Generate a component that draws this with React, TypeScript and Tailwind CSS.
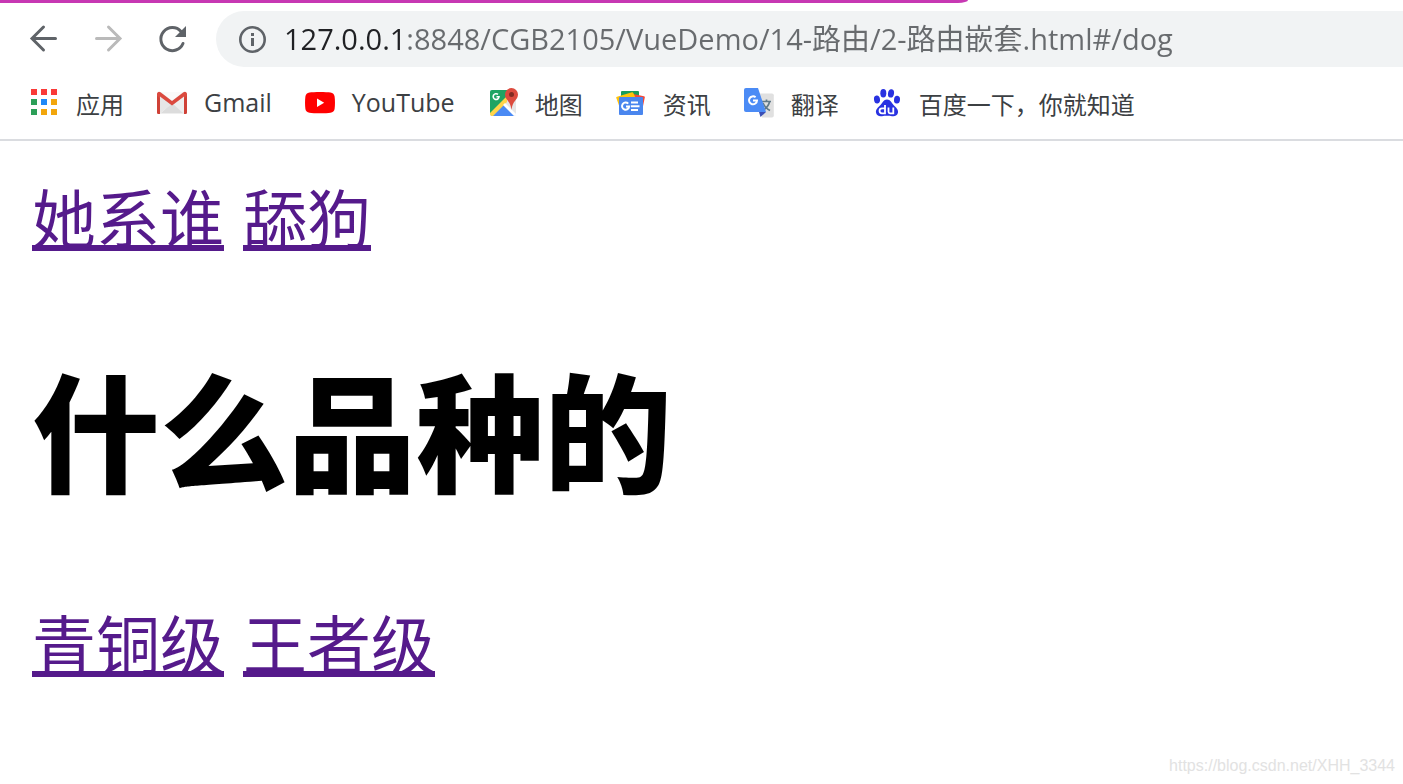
import type { ReactNode } from "react";

function BackIcon() {
  return (
    <svg viewBox="0 0 32 32" className="size-8" fill="none" stroke="#5f6368" strokeWidth="3" strokeLinecap="round" aria-hidden="true">
      <path d="M27.500 15.500H5M15.500 4 4 15.500 15.500 27" />
    </svg>
  );
}

function ForwardIcon() {
  return (
    <svg viewBox="0 0 32 32" className="size-8" fill="none" stroke="#bababa" strokeWidth="3" strokeLinecap="round" aria-hidden="true">
      <path d="M4.500 15.500H27M16.500 4 28 15.500 16.500 27" />
    </svg>
  );
}

function ReloadIcon() {
  return (
    <svg viewBox="0 0 32 32" className="size-8" fill="none" aria-hidden="true">
      <path d="M27 20.500A11.500 11.500 0 1 1 25 8.500" stroke="#5f6368" strokeWidth="3" strokeLinecap="round" />
      <path d="M30 3v11H19z" fill="#5f6368" />
    </svg>
  );
}

function InfoIcon() {
  return (
    <svg viewBox="0 0 32 32" className="size-8 shrink-0" fill="none" aria-hidden="true">
      <circle cx="16.500" cy="16.500" r="12.200" stroke="#5f6368" strokeWidth="2.600" />
      <path d="M15 10h3v3h-3zM15 15h3v8h-3z" fill="#5f6368" />
    </svg>
  );
}

function AppsIcon() {
  return (
    <svg viewBox="0 0 32 32" className="size-8" aria-hidden="true">
      <path fill="#f93a37" d="M3 2h6v6H3zM13 2h6v6h-6zM23 2h6v6h-6z" />
      <path fill="#2c9f58" d="M3 12h6v6H3zM3 22h6v6H3z" />
      <path fill="#1e88f7" d="M13 12h6v6h-6z" />
      <path fill="#f2a60c" d="M23 12h6v6h-6zM13 22h6v6h-6zM23 22h6v6h-6z" />
    </svg>
  );
}

function GmailIcon() {
  return (
    <svg viewBox="0 0 32 32" className="size-8" aria-hidden="true">
      <path fill="#eeeeee" d="M3 5h26v22H3z" />
      <path fill="#dcdcdc" d="m5 26 11-10 11 10z" />
      <path fill="#e6e6e6" d="M16 17 4 6v20z" />
      <path fill="#fafafa" d="M5 5h22L16 14z" />
      <path fill="#db4a3f" d="M1 7c0-2 2-3 3.500-1.800L16 14 27.500 5.200C29 4 31 5 31 7v18.500c0 .8-.7 1.500-1.500 1.500H28V9.500L16 18.500 4 9.500V27H2.500C1.700 27 1 26.300 1 25.500z" />
      <path fill="#c53a31" d="M1 9l3 2.500V27H2.500C1.700 27 1 26.300 1 25.500zM31 9l-3 2.500V27h1.500c.8 0 1.500-.7 1.500-1.500z" opacity=".55" />
    </svg>
  );
}

function YouTubeIcon() {
  return (
    <svg viewBox="0 0 32 32" className="size-8" aria-hidden="true">
      <path fill="#f00" d="M5.500 5.500c4-.7 17-.7 21 0 2.400.4 3.700 1.600 4.100 4 .5 3.500.5 9 0 12.500-.4 2.400-1.700 3.300-4.100 3.700-4 .7-17 .7-21 0-2.400-.4-3.700-1.300-4.100-3.700-.5-3.500-.5-9 0-12.500.4-2.400 1.700-3.600 4.100-4z" />
      <path fill="#fff" d="M13 11.500v8.400l7.200-4.200z" />
    </svg>
  );
}

function MapsIcon() {
  return (
    <svg viewBox="0 0 32 32" className="size-8" aria-hidden="true">
      <path fill="#e6e6e6" d="M5 3h22a2 2 0 0 1 2 2v22a2 2 0 0 1-2 2H5a2 2 0 0 1-2-2V5a2 2 0 0 1 2-2z" />
      <path fill="#1fa463" d="M5 3h17v5L3 27V5a2 2 0 0 1 2-2z" />
      <path fill="#4a8af4" d="m16 16 12 12a2 2 0 0 1-1 1H4z" />
      <path fill="#ffd54a" d="M20 9v6L6 29H5a2 2 0 0 1-2-2v-1z" />
      <path fill="#fff" d="m16 18 2-2 11 11a2 2 0 0 1-2 2z" />
      <path fill="none" stroke="#fff" strokeWidth="1.600" d="M11 7.400A2.900 2.900 0 1 0 12 9.800H9.500" />
      <path fill="#dc4b3e" d="M24.500 1A6.500 6.500 0 0 0 18 7.500c0 5.500 5.500 6 6.500 15.500 1-9.500 6.500-10 6.500-15.500A6.500 6.500 0 0 0 24.500 1z" />
      <circle cx="24.500" cy="7.500" r="2.500" fill="#822b22" />
    </svg>
  );
}

function NewsIcon() {
  return (
    <svg viewBox="0 0 32 32" className="size-8" aria-hidden="true">
      <path fill="#189c5b" d="M7 4h16a1 1 0 0 1 1 1v10H6V5a1 1 0 0 1 1-1z" />
      <path fill="#f3483a" d="m18 7 11 2.200c.7.200 1 .7.800 1.400L27 24 16 14z" />
      <path fill="#ffc40b" d="M2 9.800 17 5.200c.6-.2 1.100.1 1.300.7L23 16 6 24 1.300 11c-.2-.7 0-1 .7-1.200z" />
      <path fill="#4a86ee" d="M5 10h22a1 1 0 0 1 1 1v16a1 1 0 0 1-1 1H5a1 1 0 0 1-1-1V11a1 1 0 0 1 1-1z" />
      <path fill="none" stroke="#fff" strokeWidth="2" d="M13.200 16.600a3.600 3.600 0 1 0 1 2.900H11" />
      <path fill="#fff" d="M16 14.500h7v2h-7zM16 18.200h8.500v2H16zM16 22h7v2h-7z" />
    </svg>
  );
}

function TranslateIcon() {
  return (
    <svg viewBox="0 0 32 32" className="size-8" aria-hidden="true">
      <path fill="#e0e0e0" d="M12 6.500h17a1.800 1.800 0 0 1 1.800 1.800v20.400A1.800 1.800 0 0 1 29 30.500H19z" />
      <path fill="none" stroke="#607988" strokeWidth="1.700" d="M19 14.500h9M23.500 12.500v2M26.500 15c-1 4-4 7-7.500 8.500M20 16c1.500 3.500 4 6 7 7.500" />
      <path fill="#3a4fb5" d="M16 25h7l-5.500 5z" />
      <path fill="#4b8bf5" d="M3 1h12l8 24H3a2 2 0 0 1-2-2V3a2 2 0 0 1 2-2z" />
      <path fill="none" stroke="#fff" strokeWidth="2" d="M12.600 10.300A4 4 0 1 0 14 13.500h-4" />
    </svg>
  );
}

function BaiduIcon() {
  return (
    <svg viewBox="0 0 32 32" className="size-8" fill="#2932e1" aria-hidden="true">
      <ellipse cx="6" cy="12.500" rx="3" ry="4" transform="rotate(-8 6 12.500)" />
      <ellipse cx="12.300" cy="6.200" rx="3" ry="4.200" />
      <ellipse cx="20" cy="6.400" rx="3" ry="4.200" transform="rotate(10 20 6.400)" />
      <ellipse cx="26" cy="12.700" rx="3" ry="3.900" transform="rotate(6 26 12.700)" />
      <path d="M16 12.500c3.500 0 4.500 3.500 7 6 2 2 4.500 4 4 7-.5 3-3 4.200-6 3.700-3-.5-7-.5-10 0s-5.500-.7-6-3.700c-.5-3 2-5 4-7 2.500-2.500 3.500-6 7-6z" />
      <g fill="none" stroke="#fff" strokeWidth="1.800">
        <path d="M14 18v8.300h-3a2.400 2.400 0 0 1 0-4.900h3M17.500 20.500v4.300c0 1 .6 1.500 1.500 1.500h3.300v-5.800" />
      </g>
    </svg>
  );
}

const cjkLabel = "pt-1 text-2xl";
const latinLabel = "text-[25px]";

const bookmarks: { label: string; icon: ReactNode; style: string }[] = [
  { label: "应用", icon: <AppsIcon />, style: cjkLabel },
  { label: "Gmail", icon: <GmailIcon />, style: latinLabel },
  { label: "YouTube", icon: <YouTubeIcon />, style: latinLabel },
  { label: "地图", icon: <MapsIcon />, style: cjkLabel },
  { label: "资讯", icon: <NewsIcon />, style: cjkLabel },
  { label: "翻译", icon: <TranslateIcon />, style: cjkLabel },
  { label: "百度一下，你就知道", icon: <BaiduIcon />, style: cjkLabel },
];

function RouteLinks({ links }: { links: string[] }) {
  return (
    <nav className="flex flex-wrap gap-[19px] text-[64px] leading-[84px]">
      {links.map((link) => (
        <a
          key={link}
          href="#/dog"
          className="text-[#551a8b] underline decoration-[6px] underline-offset-2 [text-decoration-skip-ink:none]"
        >
          {link}
        </a>
      ))}
    </nav>
  );
}

export default function App() {
  return (
    <div className="flex min-h-screen flex-col bg-white font-['Open_Sans','Noto_Sans_CJK_SC',sans-serif]">
      <header className="border-b-2 border-[#dadce0]">
        <div className="h-[3px] w-[69%] bg-[#c738b3] [border-bottom-right-radius:10px_3px]" />
        <div className="flex items-center pt-2">
          <div className="flex gap-8 pr-7 pl-7">
            <button type="button" aria-label="后退">
              <BackIcon />
            </button>
            <button type="button" aria-label="前进">
              <ForwardIcon />
            </button>
            <button type="button" aria-label="重新加载">
              <ReloadIcon />
            </button>
          </div>
          <div className="flex h-14 min-w-0 flex-1 items-center gap-4 rounded-l-full bg-[#f1f3f4] pl-5">
            <InfoIcon />
            <input
              type="text"
              aria-label="地址"
              defaultValue="127.0.0.1:8848/CGB2105/VueDemo/14-路由/2-路由嵌套.html#/dog"
              className="h-14 min-w-0 flex-1 bg-[linear-gradient(to_right,#202124_121px,#686b6e_121px)] bg-clip-text pb-1 text-[29px] text-transparent outline-none"
            />
          </div>
        </div>
        <nav className="flex h-[72px] items-center gap-8 pl-7 text-[#3c4043]">
          {bookmarks.map(({ label, icon, style }) => (
            <a key={label} href="#" className="flex items-center gap-4 whitespace-nowrap">
              {icon}
              <span className={style}>{label}</span>
            </a>
          ))}
        </nav>
      </header>
      <main className="flex-1 px-8 pt-9">
        <RouteLinks links={["她系谁", "舔狗"]} />
        <h1 className="mt-[88px] mb-[84px] text-[128px] leading-[170px] font-black text-black">什么品种的</h1>
        <RouteLinks links={["青铜级", "王者级"]} />
      </main>
      <footer className="px-2 pb-2 text-right font-['Liberation_Sans',sans-serif] text-base leading-5 text-[#e2e2e2]">
        https://blog.csdn.net/XHH_3344
      </footer>
    </div>
  );
}
